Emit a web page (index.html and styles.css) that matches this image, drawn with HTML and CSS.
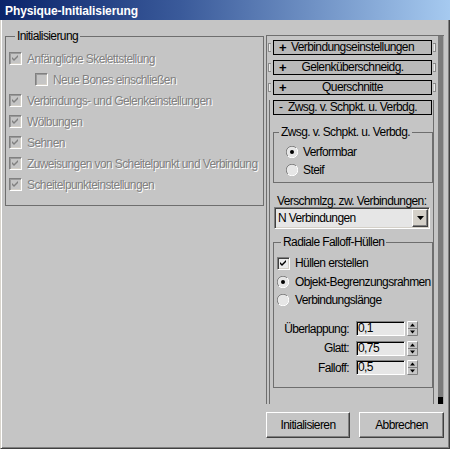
FILE: index.html
```html
<!DOCTYPE html>
<html lang="de">
<head>
<meta charset="utf-8">
<title>Physique-Initialisierung</title>
<link rel="stylesheet" href="styles.css">
</head>
<body>
<div class="window">
  <div class="titlebar">Physique-Initialisierung</div>
  <div class="client">
    <div class="left">
      <div class="group group-init">
        <div class="legend legend-init">Initialisierung</div>
        <div class="opt disabled"><span class="cb"><svg width="7" height="7" viewBox="0 0 7 7"><path d="M0 2L2 4L6 0V2L2 6L0 4Z"/></svg></span>Anfängliche Skelettstellung</div>
        <div class="opt disabled indent"><span class="cb"></span>Neue Bones einschließen</div>
        <div class="opt disabled"><span class="cb"><svg width="7" height="7" viewBox="0 0 7 7"><path d="M0 2L2 4L6 0V2L2 6L0 4Z"/></svg></span>Verbindungs- und Gelenkeinstellungen</div>
        <div class="opt disabled"><span class="cb"><svg width="7" height="7" viewBox="0 0 7 7"><path d="M0 2L2 4L6 0V2L2 6L0 4Z"/></svg></span>Wölbungen</div>
        <div class="opt disabled"><span class="cb"><svg width="7" height="7" viewBox="0 0 7 7"><path d="M0 2L2 4L6 0V2L2 6L0 4Z"/></svg></span>Sehnen</div>
        <div class="opt disabled"><span class="cb"><svg width="7" height="7" viewBox="0 0 7 7"><path d="M0 2L2 4L6 0V2L2 6L0 4Z"/></svg></span>Zuweisungen von Scheitelpunkt und Verbindung</div>
        <div class="opt disabled"><span class="cb"><svg width="7" height="7" viewBox="0 0 7 7"><path d="M0 2L2 4L6 0V2L2 6L0 4Z"/></svg></span>Scheitelpunkteinstellungen</div>
      </div>
    </div>
    <div class="right">
      <div class="panel">
        <div class="panel-content">
          <div class="rollrow"><span class="brk brk-l"></span><div class="rhead"><span class="pm">+</span><span class="rt">Verbindungseinstellungen</span></div><span class="brk brk-r"></span></div>
          <div class="rollrow"><span class="brk brk-l"></span><div class="rhead"><span class="pm">+</span><span class="rt">Gelenküberschneidg.</span></div><span class="brk brk-r"></span></div>
          <div class="rollrow"><span class="brk brk-l"></span><div class="rhead"><span class="pm">+</span><span class="rt">Querschnitte</span></div><span class="brk brk-r"></span></div>
          <div class="rollout">
            <div class="rhead"><span class="pm pm-minus">-</span><span class="rt">Zwsg. v. Schpkt. u. Verbdg.</span></div>
            <div class="group group-zwsg">
              <div class="legend legend-zwsg">Zwsg. v. Schpkt. u. Verbdg.</div>
              <div class="ropt"><svg class="rb" width="12" height="12" viewBox="0 0 12 12"><circle cx="6" cy="6" r="5.5" fill="#e6e6e6"/><path d="M1.9 10.1A5.5 5.5 0 0 1 10.1 1.9" stroke="#808080" fill="none"/><path d="M10.1 1.9A5.5 5.5 0 0 1 1.9 10.1" stroke="#fff" fill="none"/><circle cx="6" cy="6" r="2" fill="#000"/></svg>Verformbar</div>
              <div class="ropt"><svg class="rb" width="12" height="12" viewBox="0 0 12 12"><circle cx="6" cy="6" r="5.5" fill="#e6e6e6"/><path d="M1.9 10.1A5.5 5.5 0 0 1 10.1 1.9" stroke="#808080" fill="none"/><path d="M10.1 1.9A5.5 5.5 0 0 1 1.9 10.1" stroke="#fff" fill="none"/></svg>Steif</div>
            </div>
            <div class="label-verschm">Verschmlzg. zw. Verbindungen:</div>
            <div class="dropdown">
              <span class="dd-text">N Verbindungen</span>
              <span class="dd-btn"><svg width="7" height="4" viewBox="0 0 7 4"><path d="M0 0H7L3.5 4Z" fill="#000"/></svg></span>
            </div>
            <div class="group group-radial">
              <div class="legend legend-radial">Radiale Falloff-Hüllen</div>
              <div class="copt"><span class="cb cb-on"><svg width="7" height="7" viewBox="0 0 7 7"><path d="M0 2L2 4L6 0V2L2 6L0 4Z"/></svg></span>Hüllen erstellen</div>
              <div class="ropt2"><svg class="rb" width="12" height="12" viewBox="0 0 12 12"><circle cx="6" cy="6" r="5.5" fill="#e6e6e6"/><path d="M1.9 10.1A5.5 5.5 0 0 1 10.1 1.9" stroke="#808080" fill="none"/><path d="M10.1 1.9A5.5 5.5 0 0 1 1.9 10.1" stroke="#fff" fill="none"/><circle cx="6" cy="6" r="2" fill="#000"/></svg>Objekt-Begrenzungsrahmen</div>
              <div class="ropt2"><svg class="rb" width="12" height="12" viewBox="0 0 12 12"><circle cx="6" cy="6" r="5.5" fill="#e6e6e6"/><path d="M1.9 10.1A5.5 5.5 0 0 1 10.1 1.9" stroke="#808080" fill="none"/><path d="M10.1 1.9A5.5 5.5 0 0 1 1.9 10.1" stroke="#fff" fill="none"/></svg>Verbindungslänge</div>
              <div class="spinners">
                <div class="spin-row"><span class="spin-label">Überlappung:</span><span class="field">0,1</span><svg class="spin" width="11" height="15" viewBox="0 0 11 15"><rect width="11" height="15" fill="#c5c5c5"/><path d="M0.5 14.5V0.5H10.5" stroke="#fff" fill="none"/><path d="M0.5 14.5H10.5V0.5" stroke="#808080" fill="none"/><path d="M1 7.5H10" stroke="#808080"/><path d="M3 5.5H8L5.5 2.5Z" fill="#000"/><path d="M3 9.5H8L5.5 12.5Z" fill="#000"/></svg></div>
                <div class="spin-row"><span class="spin-label">Glatt:</span><span class="field">0,75</span><svg class="spin" width="11" height="15" viewBox="0 0 11 15"><rect width="11" height="15" fill="#c5c5c5"/><path d="M0.5 14.5V0.5H10.5" stroke="#fff" fill="none"/><path d="M0.5 14.5H10.5V0.5" stroke="#808080" fill="none"/><path d="M1 7.5H10" stroke="#808080"/><path d="M3 5.5H8L5.5 2.5Z" fill="#000"/><path d="M3 9.5H8L5.5 12.5Z" fill="#000"/></svg></div>
                <div class="spin-row"><span class="spin-label">Falloff:</span><span class="field">0,5</span><svg class="spin" width="11" height="15" viewBox="0 0 11 15"><rect width="11" height="15" fill="#c5c5c5"/><path d="M0.5 14.5V0.5H10.5" stroke="#fff" fill="none"/><path d="M0.5 14.5H10.5V0.5" stroke="#808080" fill="none"/><path d="M1 7.5H10" stroke="#808080"/><path d="M3 5.5H8L5.5 2.5Z" fill="#000"/><path d="M3 9.5H8L5.5 12.5Z" fill="#000"/></svg></div>
              </div>
            </div>
          </div>
        </div>
        <div class="scrollbar"><div class="thumb"></div></div>
      </div>
      <div class="buttons">
        <button class="btn btn-init">Initialisieren</button>
        <button class="btn btn-cancel">Abbrechen</button>
      </div>
    </div>
  </div>
</div>
</body>
</html>
```

FILE: styles.css
```css
* { box-sizing: border-box; }

body {
  margin: 0;
  font-family: "Liberation Sans", Arial, sans-serif;
  font-size: 12px;
  letter-spacing: -0.6px;
  color: #000;
  background: #c5c5c5;
}

.window {
  width: 450px;
  height: 449px;
  display: flex;
  flex-direction: column;
  background: #c5c5c5;
  overflow: hidden;
}

.titlebar {
  flex: none;
  height: 20px;
  padding: 3px 0 0 5px;
  line-height: 17px;
  background: linear-gradient(90deg, #0a246a 0%, #3a5a9a 40%, #a6caf0 100%);
  color: #fff;
  font-weight: bold;
  letter-spacing: -0.1px;
  white-space: nowrap;
}

.client {
  flex: 1;
  display: flex;
  gap: 2px;
  padding: 0 5px 0 4px;
  border-left: 1px solid #d8d4cc;
  border-right: 1px solid #404040;
  border-bottom: 1px solid #404040;
  box-shadow: inset 1px 0 0 #fff, inset -1px 0 0 #808080, inset 0 -1px 0 #808080;
}

.left {
  width: 259px;
  flex: none;
  padding-top: 16px;
}

.group {
  border: 1px solid #6e6e6e;
}

.legend {
  width: fit-content;
  height: 14px;
  line-height: 14px;
  margin-top: -8px;
  padding: 0 2px;
  background: #c5c5c5;
  white-space: nowrap;
}

.group-init {
  padding: 0 0 10px 3px;
}

.legend-init {
  margin-left: 6px;
  margin-bottom: 5px;
}

.opt {
  display: flex;
  align-items: center;
  height: 21px;
  white-space: nowrap;
}

.opt.indent {
  padding-left: 26px;
}

.cb {
  flex: none;
  width: 13px;
  height: 13px;
  margin-right: 5px;
  padding: 2px;
  border: 1px solid;
  border-color: #808080 #fff #fff #808080;
  box-shadow: inset 1px 1px 0 #404040, inset -1px -1px 0 #d4d0c8;
  display: flex;
}

.cb svg {
  display: block;
}

.disabled {
  color: #808080;
  text-shadow: 1px 1px 0 #fff;
}

.disabled .cb {
  background: #c5c5c5;
  box-shadow: inset 1px 1px 0 #9a9a9a, inset -1px -1px 0 #d4d0c8;
}

.disabled .cb svg {
  fill: #808080;
}

.cb-on {
  background: #ececec;
}

.cb-on svg {
  fill: #000;
}

.right {
  width: 178px;
  flex: none;
  display: flex;
  flex-direction: column;
}

.panel {
  margin-top: 15px;
  height: 369px;
  display: flex;
  border-top: 1px solid #6e6e6e;
  border-left: 1px solid #6e6e6e;
  overflow: hidden;
}

.panel-content {
  flex: 1;
  padding-top: 4px;
  min-width: 0;
}

.scrollbar {
  width: 6px;
  flex: none;
  display: flex;
  flex-direction: column;
  background: #7b7b7b;
  border-right: 1px solid #a8a8a8;
}

.thumb {
  margin-top: auto;
  height: 7px;
  background: #000;
}

.rollrow {
  display: flex;
  align-items: center;
  height: 15px;
  margin-bottom: 5px;
  padding-left: 1px;
}

.brk {
  flex: none;
  width: 3px;
  height: 9px;
  border: 1px solid #8a8a8a;
  box-shadow: inset 1px 0 0 #ececec;
}

.brk-l {
  border-right: 0;
  margin-right: 2px;
}

.brk-r {
  border-left: 0;
  margin-left: 1px;
  box-shadow: inset -1px 0 0 #ececec;
}

.rhead {
  flex: none;
  width: 159px;
  height: 15px;
  border: 1px solid #000;
  background: #b9b9b9;
  display: grid;
  grid-template-columns: 14px 1fr 14px;
  align-items: center;
  line-height: 13px;
  white-space: nowrap;
}

.pm {
  padding-left: 5px;
  font-weight: bold;
  font-size: 13px;
  letter-spacing: 0;
}

.pm-minus {
  font-weight: normal;
  font-size: 12px;
}

.rt {
  text-align: center;
}

.rollout {
  margin-left: 2px;
  width: 165px;
  border-left: 1px solid #6e6e6e;
  border-right: 1px solid #6e6e6e;
  padding: 0 0 60px 3px;
}

.group-zwsg {
  margin-top: 17px;
  padding: 0 0 3px 12px;
}

.legend-zwsg {
  margin-left: -7px;
  margin-bottom: 4px;
}

.ropt {
  display: flex;
  align-items: center;
  height: 18px;
  white-space: nowrap;
}

.rb {
  flex: none;
  display: block;
  margin-right: 5px;
}

.label-verschm {
  margin: 12px 0 0 4px;
  line-height: 12px;
  height: 12px;
  white-space: nowrap;
}

.dropdown {
  margin-left: 1px;
  width: 156px;
  height: 22px;
  display: flex;
  align-items: center;
  border: 1px solid;
  border-color: #808080 #fff #fff #808080;
  box-shadow: inset 1px 1px 0 #404040, inset -1px -1px 0 #d4d0c8;
  background: #e6e6e6;
  padding: 1px 1px 1px 3px;
}

.dd-text {
  flex: 1;
  white-space: nowrap;
}

.dd-btn {
  flex: none;
  width: 16px;
  height: 18px;
  background: #d4d0c8;
  border: 1px solid;
  border-color: #fff #404040 #404040 #fff;
  box-shadow: inset -1px -1px 0 #808080;
  display: flex;
  align-items: center;
  justify-content: center;
}

.dd-btn svg {
  display: block;
}

.group-radial {
  margin-top: 13px;
  padding: 0 0 12px 3px;
}

.legend-radial {
  margin-left: 4px;
  margin-bottom: 5px;
}

.copt {
  display: flex;
  align-items: center;
  height: 18px;
  margin-bottom: 1px;
  white-space: nowrap;
}

.ropt2 {
  display: flex;
  align-items: center;
  height: 18px;
  white-space: nowrap;
}

.ropt2 .rb {
  margin-right: 6px;
}

.spinners {
  margin-top: 12px;
  margin-left: -3px;
  display: flex;
  flex-direction: column;
  gap: 4.5px;
}

.spin-row {
  display: flex;
  align-items: center;
  height: 15px;
}

.spin-label {
  width: 75px;
  margin-right: 7px;
  text-align: right;
  white-space: nowrap;
}

.field {
  width: 49px;
  height: 15px;
  line-height: 12px;
  border: 1px solid;
  border-color: #808080 #fff #fff #808080;
  box-shadow: inset 1px 1px 0 #000;
  background: #e6e6e6;
  padding-left: 1px;
  white-space: nowrap;
}

.spin {
  display: block;
  flex: none;
  margin-left: 2px;
}

.buttons {
  margin-top: 8px;
  display: flex;
  gap: 9px;
}

.btn {
  font: inherit;
  letter-spacing: inherit;
  color: #000;
  height: 26px;
  padding: 0;
  background: #c5c5c5;
  border: 1px solid;
  border-color: #fff #404040 #404040 #fff;
  box-shadow: inset -1px -1px 0 #808080;
  text-align: center;
}

.btn-init {
  width: 84px;
}

.btn-cancel {
  width: 85px;
}
```
